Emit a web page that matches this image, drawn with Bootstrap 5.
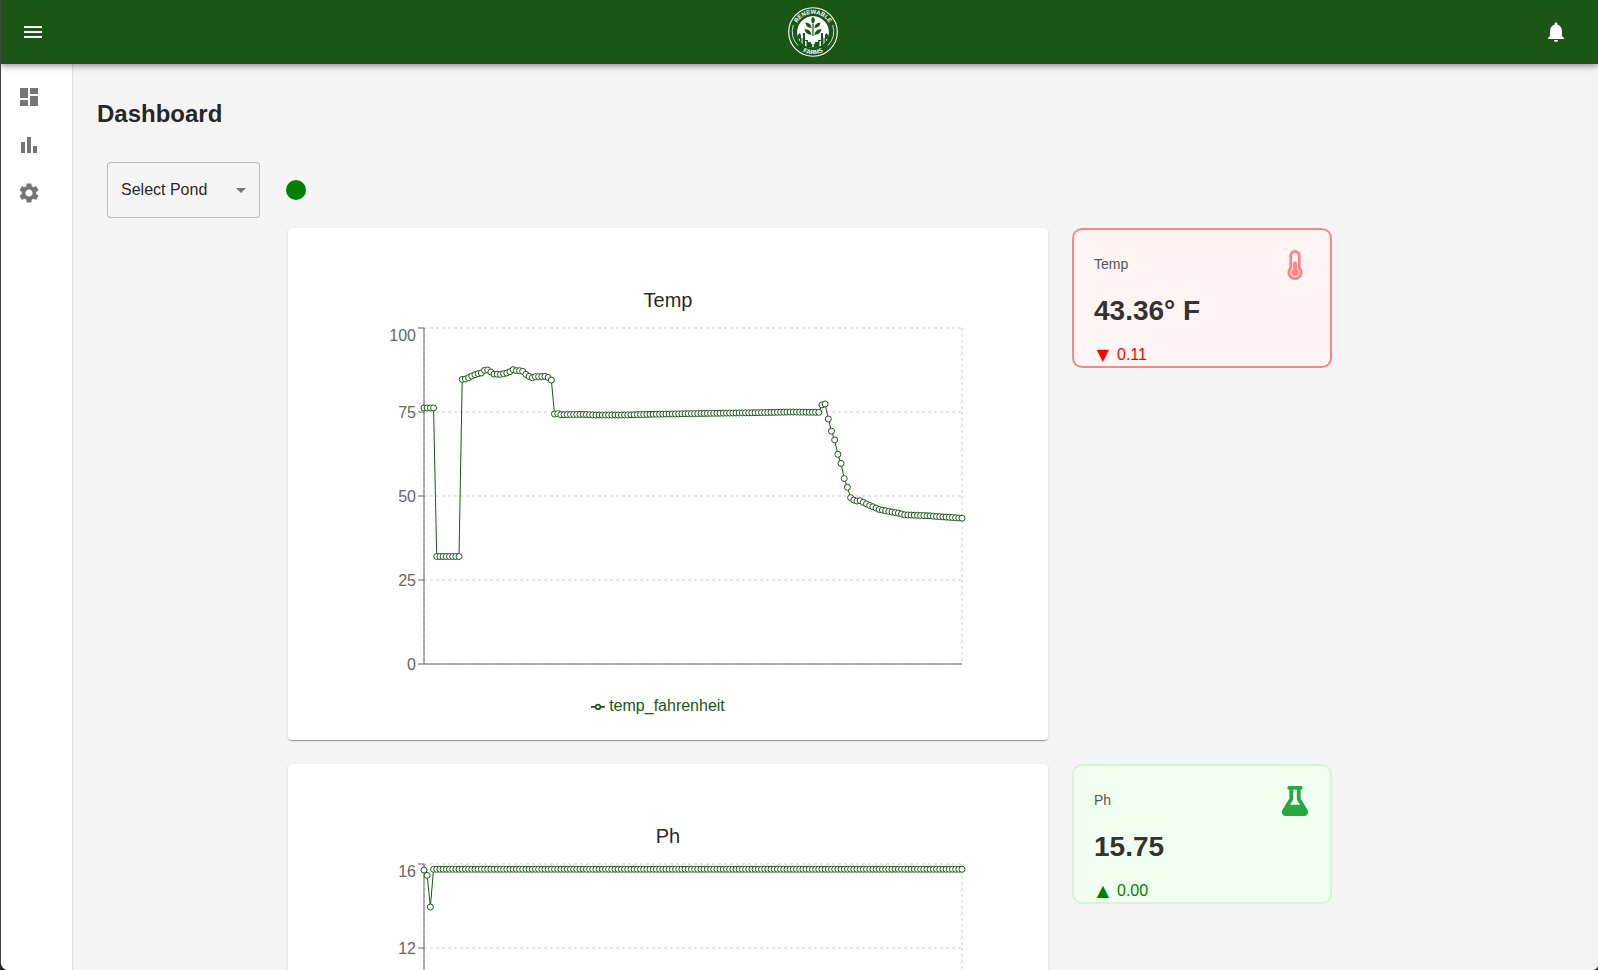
<!DOCTYPE html>
<html lang="en">
<head>
<meta charset="utf-8">
<meta name="viewport" content="width=device-width, initial-scale=1">
<title>Renewable Farms – Dashboard</title>
<link href="https://cdn.jsdelivr.net/npm/bootstrap@5.3.0/dist/css/bootstrap.min.css" rel="stylesheet">
<style>
  :root { --farm-green: #1a5716; --page-bg: #f5f5f5; }
  html { background: #222; }
  body { font-family: "Liberation Sans", Arial, sans-serif; color: rgba(0,0,0,.87); background: transparent; }
  .app-shell { border-left: 1px solid #444; border-radius: 0 0 5px 8px; background: var(--page-bg); }
  .app-bar {
    height: 64px; background: var(--farm-green); z-index: 2; padding: 0 18px 0 8px;
    box-shadow: 0 2px 4px -1px rgba(0,0,0,.2), 0 4px 5px rgba(0,0,0,.14), 0 1px 10px rgba(0,0,0,.12);
  }
  .icon-btn { padding: 12px; border: 0; background: none; color: #fff; line-height: 0; }
  .menu-btn { margin-right: 37px; }
  .glyph { width: 24px; height: 24px; fill: currentColor; display: block; }
  .side-rail { width: 72px; background: #fff; border-right: 1px solid #e0e0e0; padding: 21px 16px; gap: 24px; }
  .side-rail a { color: #757575; }
  .content { padding: 32px 24px 24px; scrollbar-width: none; }
  .content::-webkit-scrollbar { display: none; }
  .page-title { font-size: 24px; line-height: 36px; font-weight: 700; margin-bottom: 20px; }
  .pond-bar { padding: 10px; gap: 26px; }
  .pond-select {
    width: 153px; height: 56px; padding: 0 32px 0 13px; font-size: 16px; color: inherit;
    border: 1px solid rgba(0,0,0,.23); border-radius: 4px; background-color: transparent;
    background-image: url("data:image/svg+xml,%3Csvg xmlns='http://www.w3.org/2000/svg' viewBox='0 0 24 24'%3E%3Cpath fill='%23757575' d='M7 10l5 5 5-5z'/%3E%3C/svg%3E");
    background-size: 24px 24px; background-position: right 6px center;
  }
  .status-dot { width: 20px; height: 20px; background: green; }
  .metrics { gap: 24px; padding-right: 51px; }
  .metric { gap: 24px; }
  .chart-card {
    flex: 0 1 760px; min-width: 0; border: 0; border-radius: 4px; padding: 56px 0 22px;
    box-shadow: 0 2px 1px -1px rgba(0,0,0,.2), 0 1px 1px rgba(0,0,0,.14), 0 1px 3px rgba(0,0,0,.12);
  }
  .chart-title { font-size: 20px; line-height: 32px; font-weight: 400; margin: 0; }
  .chart-plot { width: 100%; display: block; overflow: visible; }
  .chart-plot text { font-size: 16px; fill: #666; text-anchor: end; }
  .grid-line { stroke: #ccc; stroke-dasharray: 3 3; fill: none; }
  .axis-line { stroke: #666; fill: none; }
  .series { stroke: var(--farm-green); fill: none; }
  .series-dot { stroke: var(--farm-green); fill: #fff; }
  .chart-legend { margin-top: 6px; padding-right: 20px; gap: 4px; font-size: 16px; line-height: 24px; color: var(--farm-green); }
  .stat-card { flex: 0 0 260px; height: 140px; border: 2px solid; border-radius: 10px; padding: 20px; }
  .stat-hot { border-color: #ff8585; background: #fff5f5; }
  .stat-hot .stat-icon { color: #ff8585; }
  .stat-ok { border-color: #d4f5d4; background: #f0fff0; }
  .stat-ok .stat-icon { color: #28a745; }
  .stat-icon { width: 30px; height: 30px; fill: currentColor; }
  .stat-label { font-size: 14px; line-height: 28px; color: #555; }
  .stat-value { font-size: 28px; line-height: 32px; font-weight: 700; color: #333; margin-top: 15px; }
  .stat-trend { font-size: 16px; line-height: 24px; margin-top: 16px; gap: 5px; }
  .trend-mark { width: 18px; text-align: center; font-family: "DejaVu Sans", sans-serif; }
  .trend-down { color: red; }
  .trend-up { color: green; }
</style>
</head>
<body class="vh-100 overflow-hidden">
<div class="app-shell d-flex flex-column h-100 overflow-hidden">
  <header class="app-bar d-flex align-items-center position-relative flex-shrink-0">
    <button class="icon-btn menu-btn" type="button" aria-label="Open menu">
      <svg class="glyph" viewBox="0 0 24 24"><path d="M3 18h18v-2H3zm0-5h18v-2H3zm0-7v2h18V6z"/></svg>
    </button>
    <a class="flex-grow-1 d-flex justify-content-center" href="#" aria-label="Renewable Farms home">
      <svg width="50" height="50" viewBox="0 0 50 50" fill="none">
        <defs>
          <path id="arcTop" d="M6.800 25a18.200 18.200 0 0 1 36.400 0"/>
          <path id="arcBottom" d="M2.800 25a22.200 22.200 0 0 0 44.400 0"/>
          <clipPath id="disc"><circle cx="25" cy="25" r="16"/></clipPath>
        </defs>
        <circle cx="25" cy="25" r="24.300" stroke="#fff" stroke-width="1.100"/>
        <path d="M10 38.500A21 21 0 0 1 5.300 18M40 38.500A21 21 0 0 0 44.700 18" stroke="#fff" stroke-width=".8"/>
        <g clip-path="url(#disc)">
          <circle cx="25" cy="25" r="16" fill="#fff"/>
          <path fill="#1a5716" d="M8 31h2v-3l1.500-2 1.500 2v3h2v-5h2v7h3v2h3v2h4v-2h3v-2h3v-7h2v5h2v-3l1.500-2 1.500 2v6h3v12H8z"/>
          <path fill="#fff" d="M10 32h2v3h-2zm3.500-1h1v7h-1zm3.500 3h1.500v5H17zm14.500 0H33v5h-1.500zm4-3h1v7h-1zm2.500 1h2v3h-2z"/>
        </g>
        <g fill="#1a5716">
          <path d="M25 9.500c2.400 2.800 2.400 5 0 7.500-2.400-2.500-2.400-4.700 0-7.500z"/>
          <path d="M17.500 15.500c4 .5 5.700 2 6 5.500-3.800-.3-5.500-2-6-5.500zM32.500 15.500c-4 .5-5.700 2-6 5.500 3.800-.3 5.500-2 6-5.500z"/>
          <path d="M16.500 22c4.300.5 6.500 2 7 6-4.300-.5-6.500-2.500-7-6zM33.500 22c-4.300.5-6.500 2-7 6 4.300-.5 6.500-2.500 7-6z"/>
        </g>
        <path d="M25 17v12" stroke="#1a5716" stroke-width="1.200"/>
        <path d="M25 29v11M25 34l-5-4.500M25 34l5-4.500" stroke="#fff" stroke-width="1.400"/>
        <g fill="#fff" font-size="6" font-weight="700" text-anchor="middle">
          <text><textPath href="#arcTop" startOffset="50%">RENEWABLE</textPath></text>
          <text><textPath href="#arcBottom" startOffset="50%">FARMS</textPath></text>
        </g>
      </svg>
    </a>
    <button class="icon-btn" type="button" aria-label="Notifications">
      <svg class="glyph" viewBox="0 0 24 24"><path d="M12 22c1.100 0 2-.9 2-2h-4c0 1.100.89 2 2 2zm6-6v-5c0-3.070-1.640-5.640-4.500-6.320V4c0-.83-.67-1.500-1.500-1.500s-1.500.67-1.500 1.500v.68C7.630 5.360 6 7.920 6 11v5l-2 2v1h16v-1l-2-2z"/></svg>
    </button>
  </header>

  <div class="d-flex flex-grow-1 overflow-hidden">
    <nav class="side-rail d-flex flex-column flex-shrink-0" aria-label="Main">
      <a href="#" aria-label="Dashboard"><svg class="glyph" viewBox="0 0 24 24"><path d="M3 13h8V3H3v10zm0 8h8v-6H3v6zm10 0h8V11h-8v10zm0-18v6h8V3h-8z"/></svg></a>
      <a href="#" aria-label="Charts"><svg class="glyph" viewBox="0 0 24 24"><path d="M4 9h4v11H4zm12 4h4v7h-4zm-6-9h4v16h-4z"/></svg></a>
      <a href="#" aria-label="Settings"><svg class="glyph" viewBox="0 0 24 24"><path d="M19.140 12.940c.04-.3.06-.61.06-.94 0-.32-.02-.64-.07-.94l2.030-1.580c.18-.14.23-.41.12-.61l-1.920-3.320c-.12-.22-.37-.29-.59-.22l-2.390.96c-.5-.38-1.030-.7-1.620-.94l-.36-2.540c-.04-.24-.24-.41-.48-.41h-3.840c-.24 0-.43.17-.47.41l-.36 2.540c-.59.24-1.130.57-1.620.94l-2.390-.96c-.22-.08-.47 0-.59.22L2.740 8.870c-.12.21-.08.47.12.61l2.030 1.580c-.05.3-.09.63-.09.94s.02.64.07.94l-2.030 1.580c-.18.14-.23.41-.12.61l1.920 3.320c.12.22.37.29.59.22l2.390-.96c.5.38 1.030.7 1.620.94l.36 2.540c.05.24.24.41.48.41h3.840c.24 0 .44-.17.47-.41l.36-2.540c.59-.24 1.130-.56 1.620-.94l2.390.96c.22.08.47 0 .59-.22l1.920-3.320c.12-.22.07-.47-.12-.61l-2.010-1.580zM12 15.600c-1.980 0-3.600-1.620-3.600-3.600s1.620-3.600 3.600-3.600 3.600 1.620 3.600 3.600-1.620 3.600-3.600 3.600z"/></svg></a>
    </nav>

    <main class="content flex-grow-1 overflow-auto">
      <h1 class="page-title">Dashboard</h1>
      <div class="pond-bar d-flex align-items-center">
        <select class="form-select pond-select" aria-label="Select Pond"><option>Select Pond</option></select>
        <span class="status-dot rounded-circle" role="img" aria-label="Online"></span>
      </div>

      <div class="metrics d-flex flex-column">
        <section class="metric d-flex justify-content-center align-items-start">
          <div class="card chart-card">
            <h2 class="chart-title text-center">Temp</h2>
            <svg class="chart-plot" id="tempChart" viewBox="0 0 760 372"></svg>
            <div class="chart-legend d-flex justify-content-center align-items-center">
              <svg width="14" height="14" viewBox="0 0 32 32" fill="none" stroke="currentColor" stroke-width="4"><path d="M0 18h10.700a5.300 5.300 0 1 1 10.600 0H32M21.300 18a5.300 5.300 0 1 1-10.600 0"/></svg>
              <span>temp_fahrenheit</span>
            </div>
          </div>
          <div class="stat-card stat-hot">
            <div class="d-flex justify-content-between align-items-start">
              <span class="stat-label">Temp</span>
              <svg class="stat-icon" viewBox="-128 0 512 512"><path d="M192 384c0 35.346-28.654 64-64 64s-64-28.654-64-64c0-23.685 12.876-44.349 32-55.417V224c0-17.673 14.327-32 32-32s32 14.327 32 32v104.583c19.124 11.068 32 31.732 32 55.417zm32-84.653c19.912 22.563 32 52.194 32 84.653 0 70.696-57.303 128-128 128-.299 0-.609-.001-.909-.003C56.789 511.509-.357 453.636.002 383.333.166 351.135 12.225 321.755 32 299.347V96c0-53.019 42.981-96 96-96s96 42.981 96 96v203.347zM208 384c0-34.339-19.370-52.190-32-66.502V96c0-26.467-21.533-48-48-48S80 69.533 80 96v221.498c-12.732 14.428-31.825 32.100-31.999 66.080-.224 43.876 35.563 80.116 79.423 80.420L128 464c44.112 0 80-35.888 80-80z"/></svg>
            </div>
            <div class="stat-value">43.36° F</div>
            <div class="stat-trend trend-down d-flex"><span class="trend-mark">▼</span><span>0.11</span></div>
          </div>
        </section>

        <section class="metric d-flex justify-content-center align-items-start">
          <div class="card chart-card">
            <h2 class="chart-title text-center">Ph</h2>
            <svg class="chart-plot" id="phChart" viewBox="0 0 760 372"></svg>
            <div class="chart-legend d-flex justify-content-center align-items-center">
              <svg width="14" height="14" viewBox="0 0 32 32" fill="none" stroke="currentColor" stroke-width="4"><path d="M0 18h10.700a5.300 5.300 0 1 1 10.600 0H32M21.300 18a5.300 5.300 0 1 1-10.600 0"/></svg>
              <span>ph</span>
            </div>
          </div>
          <div class="stat-card stat-ok">
            <div class="d-flex justify-content-between align-items-start">
              <span class="stat-label">Ph</span>
              <svg class="stat-icon" viewBox="-32 0 512 512"><path d="M437.200 403.500L320 215V64h8c13.300 0 24-10.700 24-24V24c0-13.300-10.700-24-24-24H120c-13.300 0-24 10.700-24 24v16c0 13.300 10.700 24 24 24h8v151L10.800 403.500C-18.500 450.600 15.300 512 70.900 512h306.200c55.700 0 89.400-61.500 60.100-108.500zM137.900 320l48.200-77.600c3.700-5.200 5.800-11.600 5.800-18.400V64h64v160c0 6.900 2.200 13.200 5.800 18.400l48.200 77.600h-172z"/></svg>
            </div>
            <div class="stat-value">15.75</div>
            <div class="stat-trend trend-up d-flex"><span class="trend-mark">▲</span><span>0.00</span></div>
          </div>
        </section>
      </div>
    </main>
  </div>
</div>

<script src="https://cdn.jsdelivr.net/npm/bootstrap@5.3.0/dist/js/bootstrap.bundle.min.js"></script>
<script>
  // Plot area inside each chart's viewBox
  const area = { left: 136, right: 674, top: 12, bottom: 348 };
  const COUNT = 170;

  // Fill every reading between the known [index, value] pairs
  function expand(knots) {
    const out = [];
    for (let k = 0; k < knots.length; k++) {
      const [i, v] = knots[k];
      out[i] = v;
      if (k + 1 < knots.length) {
        const [j, w] = knots[k + 1];
        for (let n = i + 1; n < j; n++) out[n] = v + (w - v) * (n - i) / (j - i);
      }
    }
    return out;
  }

  function drawChart(id, values, max, ticks) {
    const y = v => area.bottom - (area.bottom - area.top) * v / max;
    const x = i => area.left + (area.right - area.left) * i / (COUNT - 1);
    let s = '';
    ticks.forEach(t => s += `<path class="grid-line" d="M${area.left} ${y(t)}H${area.right}"/>`);
    s += `<path class="grid-line" d="M${area.left} ${area.top}V${area.bottom}"/>`;
    s += `<path class="grid-line" d="M${area.right} ${area.top}V${area.bottom}"/>`;
    s += `<path class="axis-line" d="M${area.left} ${area.top}V${area.bottom}H${area.right}"/>`;
    ticks.forEach(t => {
      s += `<path class="axis-line" d="M${area.left - 6} ${y(t)}H${area.left}"/>`;
      s += `<text x="${area.left - 8}" y="${y(t) + (t === max ? 13 : 6)}">${t}</text>`;
    });
    s += `<polyline class="series" points="${values.map((v, i) => x(i) + ',' + y(v)).join(' ')}"/>`;
    values.forEach((v, i) => s += `<circle class="series-dot" cx="${x(i)}" cy="${y(v)}" r="3"/>`);
    document.getElementById(id).innerHTML = s;
  }

  const temp = expand([
    [0, 76.2], [3, 76.2], [4, 32], [11, 32],
    [12, 84.7], [13, 84.8], [14, 85.2], [15, 85.7], [16, 86.1], [17, 86.4], [18, 86.6], [19, 87.4], [20, 87.5],
    [21, 86.9], [22, 86.3], [24, 86.2], [25, 86.4], [26, 86.6], [27, 87], [28, 87.6], [29, 87.3], [30, 87.3],
    [31, 87.1], [32, 86.2], [33, 85.6], [34, 85.2], [35, 85.5], [38, 85.6], [39, 85.3], [40, 84.5],
    [41, 74.4], [42, 74.5], [43, 74.2], [50, 74.3], [54, 74.1], [63, 74.1], [70, 74.3], [90, 74.6], [105, 74.8],
    [115, 75], [124, 74.9], [125, 77.1], [126, 77.4], [127, 72.9], [128, 69.3], [129, 66.7], [130, 62.4],
    [131, 59.7], [132, 55.2], [133, 52.6], [134, 49.5], [135, 48.8], [136, 48.5], [137, 48.6], [138, 48.1],
    [140, 47.2], [143, 46], [146, 45.4], [149, 44.9], [151, 44.4], [159, 44.1], [161, 43.9], [166, 43.6], [169, 43.4]
  ]);
  const ph = expand([[0, 15.71], [1, 15.46], [2, 13.95], [3, 15.75], [169, 15.75]]);

  drawChart('tempChart', temp, 100, [0, 25, 50, 75, 100]);
  drawChart('phChart', ph, 16, [0, 4, 8, 12, 16]);
</script>
</body>
</html>
